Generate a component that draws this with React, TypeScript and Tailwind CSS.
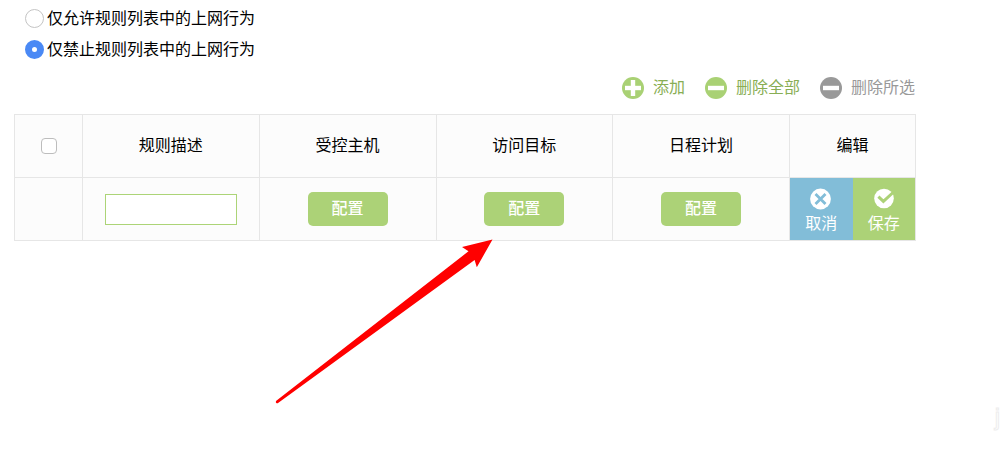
import React, { useState } from "react";

type Mode = "allow" | "deny";

const modes: { value: Mode; label: string }[] = [
  { value: "allow", label: "仅允许规则列表中的上网行为" },
  { value: "deny", label: "仅禁止规则列表中的上网行为" },
];

const configColumns = ["受控主机", "访问目标", "日程计划"];

function CircleIcon({ plus = false }: { plus?: boolean }) {
  return (
    <svg viewBox="0 0 22 22" className="size-[22px]" aria-hidden="true">
      <circle cx="11" cy="11" r="11" fill="currentColor" />
      <path d="M3 11h16" stroke="#fff" strokeWidth="4.4" />
      {plus && <path d="M11 3v16" stroke="#fff" strokeWidth="4.4" />}
    </svg>
  );
}

function CancelIcon() {
  return (
    <svg viewBox="0 0 22 22" className="size-[22px]" aria-hidden="true">
      <circle cx="10.5" cy="11" r="10.4" fill="#fff" />
      <path d="M5.5 6l10 10M15.5 6l-10 10" stroke="#82bdd8" strokeWidth="2.8" />
    </svg>
  );
}

function SaveIcon() {
  return (
    <svg viewBox="0 0 22 22" className="size-[22px]" aria-hidden="true">
      <circle cx="11" cy="10.5" r="9.8" fill="#fff" />
      <path d="M5.4 8.6l5 4.8L20.6 4" fill="none" stroke="#acd277" strokeWidth="3" />
    </svg>
  );
}

export default function App() {
  const [mode, setMode] = useState<Mode>("deny");
  const [description, setDescription] = useState("");

  return (
    <main className="overflow-hidden bg-white font-['Liberation_Sans','Noto_Sans_CJK_SC',sans-serif] text-base text-black">
      <div className="pt-[3px] pr-[84px] pl-[14px]">
        <div className="pl-[11px]">
          {modes.map((item) => (
            <label key={item.value} className="flex h-[31px] items-center gap-[3px]">
              <input
                type="radio"
                name="mode"
                checked={mode === item.value}
                onChange={() => setMode(item.value)}
                className="size-[19px] appearance-none rounded-full border border-[#c4c4c4] bg-white checked:border-[7px] checked:border-[#4a89f5]"
              />
              {item.label}
            </label>
          ))}
        </div>

        <div className="mb-[3px] flex h-[46px] items-center justify-end gap-5 pr-px">
          <button type="button" className="flex items-center gap-[9px]">
            <span className="text-[#a9d174]"><CircleIcon plus /></span>
            <span className="text-[#88ae54]">添加</span>
          </button>
          <button type="button" className="flex items-center gap-[9px]">
            <span className="text-[#a9d174]"><CircleIcon /></span>
            <span className="text-[#88ae54]">删除全部</span>
          </button>
          <button type="button" className="flex items-center gap-[9px] text-[#999]">
            <CircleIcon />
            <span>删除所选</span>
          </button>
        </div>

        <div className="relative">
          <table className="w-full table-fixed border-collapse bg-[#fcfcfc] text-center">
            <colgroup>
              <col className="w-[68px]" />
              <col />
              <col />
              <col />
              <col />
              <col className="w-[126px]" />
            </colgroup>
            <thead>
              <tr className="h-[63px]">
                <th className="border border-[#e6e6e6] p-0">
                  <input
                    type="checkbox"
                    aria-label="全选"
                    className="block mx-auto size-4 appearance-none rounded border border-[#bdbdbd] bg-white checked:bg-[#4a89f5]"
                  />
                </th>
                <th className="border border-[#e6e6e6] p-0 font-normal">规则描述</th>
                {configColumns.map((name) => (
                  <th key={name} className="border border-[#e6e6e6] p-0 font-normal">{name}</th>
                ))}
                <th className="border border-[#e6e6e6] p-0 font-normal">编辑</th>
              </tr>
            </thead>
            <tbody>
              <tr className="h-[63px]">
                <td className="border border-[#e6e6e6] p-0"></td>
                <td className="border border-[#e6e6e6] p-0">
                  <input
                    type="text"
                    aria-label="规则描述"
                    value={description}
                    onChange={(e) => setDescription(e.target.value)}
                    className="block mx-auto h-[31px] w-[132px] border border-[#acd477] bg-white px-2 outline-none"
                  />
                </td>
                {configColumns.map((name) => (
                  <td key={name} className="border border-[#e6e6e6] p-0">
                    <button
                      type="button"
                      aria-label={`配置${name}`}
                      className="block mx-auto h-[34px] w-20 rounded-[5px] bg-[#acd277] font-medium text-white"
                    >
                      配置
                    </button>
                  </td>
                ))}
                <td className="border border-[#e6e6e6] p-0">
                  <div className="flex h-[62px] text-white">
                    <button type="button" className="flex flex-1 flex-col items-center gap-0.5 bg-[#82bdd8] pt-2.5">
                      <CancelIcon />
                      <span>取消</span>
                    </button>
                    <button type="button" className="flex flex-1 flex-col items-center gap-0.5 bg-[#acd277] pt-2.5">
                      <SaveIcon />
                      <span>保存</span>
                    </button>
                  </div>
                </td>
              </tr>
            </tbody>
          </table>

          {/* arrow pointing at the target column */}
          <svg
            viewBox="0 0 218 166"
            className="pointer-events-none absolute top-[125px] left-[261px] h-[166px] w-[218px]"
            aria-hidden="true"
          >
            <path
              d="M217.5 .5L187 8l6.5 4.3L1.3 161.8q-1 1.4 0 2.1.9.7 2.1-.2L199.6 21l2.2 7.3z"
              fill="#f00"
            />
          </svg>
        </div>
      </div>

      <div className="mt-40 flex justify-end text-2xl leading-8 text-white [-webkit-text-stroke:1px_#ededed]">
        <span aria-hidden="true">j</span>
      </div>
    </main>
  );
}
